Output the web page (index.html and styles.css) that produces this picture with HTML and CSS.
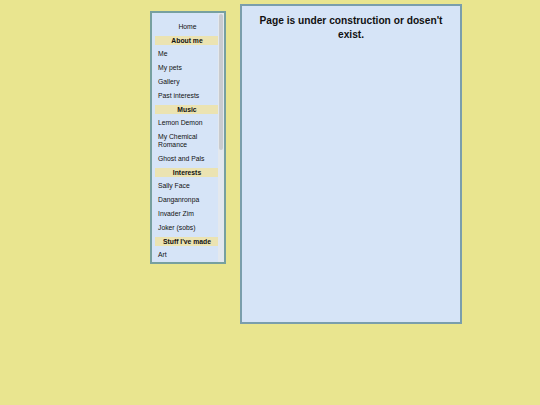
FILE: index.html
```html
<!DOCTYPE html>
<html>
<head>
<meta charset="utf-8">
<link rel="stylesheet" href="styles.css">
</head>
<body>
<div class="layout">
  <div class="sidebar-wrap">
    <nav class="sidebar">
      <div class="item center">Home</div>
      <div class="head">About me</div>
      <div class="item">Me</div>
      <div class="item">My pets</div>
      <div class="item">Gallery</div>
      <div class="item">Past interests</div>
      <div class="head">Music</div>
      <div class="item">Lemon Demon</div>
      <div class="item">My Chemical Romance</div>
      <div class="item">Ghost and Pals</div>
      <div class="head">Interests</div>
      <div class="item">Sally Face</div>
      <div class="item">Danganronpa</div>
      <div class="item">Invader Zim</div>
      <div class="item">Joker (sobs)</div>
      <div class="head">Stuff I've made</div>
      <div class="item">Art</div>
    </nav>
    <div class="scrollbar"><div class="thumb"></div></div>
  </div>
  <main class="main">
    <h1 class="title">Page is under construction or dosen't exist.</h1>
  </main>
</div>
</body>
</html>
```
FILE: styles.css
```css
html, body {
  margin: 0;
  padding: 0;
  background: #e9e58f;
  font-family: "Liberation Sans", Arial, sans-serif;
  color: #111;
}
.layout {
  display: flex;
  align-items: flex-start;
  padding-left: 150px;
  gap: 14px;
}
.sidebar-wrap {
  position: relative;
  margin-top: 11px;
  width: 76px;
  height: 253px;
  border: 2px solid #77a09f;
  background: #d6e4f7;
  box-sizing: border-box;
  overflow: hidden;
}
.sidebar {
  height: 100%;
  overflow: hidden;
  padding: 7px 5px 0 0;
  box-sizing: border-box;
  font-size: 6.8px;
}
.scrollbar {
  position: absolute;
  top: 0;
  right: 0;
  width: 6px;
  height: 100%;
  background: #e3e8ee;
}
.thumb {
  margin: 1px 1px 0 1px;
  height: 136px;
  background: #c9cbce;
  border-radius: 3px;
}
.item {
  line-height: 8px;
  padding: 3px 2px 3px 6px;
}
.item.center {
  text-align: center;
}
.head {
  line-height: 9px;
  margin: 2px 0 2px 3px;
  background: #ebe3b2;
  text-align: center;
  font-weight: bold;
}
.main {
  margin-top: 4px;
  width: 222px;
  height: 320px;
  border: 2px solid #7a9eac;
  background: #d6e4f7;
  padding: 0 12px;
  box-sizing: border-box;
}
.title {
  margin: 8px 0 0 0;
  font-size: 10.2px;
  line-height: 14px;
  text-align: center;
  font-weight: bold;
}
```
